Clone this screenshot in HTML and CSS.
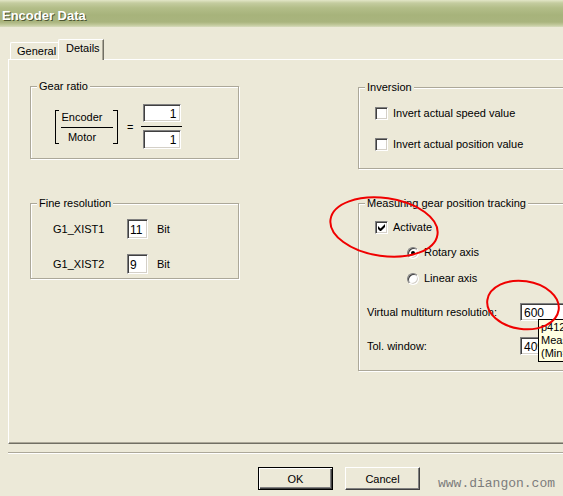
FILE: index.html
```html
<!DOCTYPE html>
<html>
<head>
<meta charset="utf-8">
<title>Encoder Data</title>
<link rel="stylesheet" href="styles.css">
</head>
<body>
<div class="titlebar"><span class="title">Encoder Data</span></div>
<div class="tabs">
  <div class="tab">General</div>
  <div class="tab active">Details</div>
</div>
<div class="panel">
  <div class="col col-left">
    <div class="group gear">
      <div class="gtitle">Gear ratio</div>
      <div class="gear-row">
        <div class="ratio">
          <span class="br br-l"></span>
          <div class="frac">
            <span>Encoder</span>
            <i class="fline"></i>
            <span class="motor">Motor</span>
          </div>
          <span class="br br-r"></span>
        </div>
        <span class="eq">=</span>
        <div class="boxes">
          <div class="field num b1">1</div>
          <i class="fline2"></i>
          <div class="field num b2">1</div>
        </div>
      </div>
    </div>
    <div class="group fine">
      <div class="gtitle">Fine resolution</div>
      <div class="frow first">
        <span class="flabel">G1_XIST1</span>
        <div class="field small">11</div>
        <span class="unit">Bit</span>
      </div>
      <div class="frow second">
        <span class="flabel">G1_XIST2</span>
        <div class="field small">9</div>
        <span class="unit">Bit</span>
      </div>
    </div>
  </div>
  <div class="col col-right">
    <div class="group inversion">
      <div class="gtitle">Inversion</div>
      <div class="crow inv1"><span class="cb"></span><span class="clabel">Invert actual speed value</span></div>
      <div class="crow inv2"><span class="cb"></span><span class="clabel">Invert actual position value</span></div>
    </div>
    <div class="group tracking">
      <div class="gtitle">Measuring gear position tracking</div>
      <div class="crow act">
        <span class="cb checked"><svg width="7" height="7" viewBox="0 0 7 7"><path d="M0 2v3l2 2h1l4-4V0L2.5 4.5z" fill="#000"/></svg></span>
        <span class="clabel">Activate</span>
      </div>
      <div class="rrow rot"><span class="rb on"></span><span class="clabel">Rotary axis</span></div>
      <div class="rrow lin"><span class="rb"></span><span class="clabel">Linear axis</span></div>
      <div class="vrow vmr">
        <span class="vlabel">Virtual multiturn resolution:</span>
        <div class="field wide">600</div>
      </div>
      <div class="vrow tol">
        <span class="vlabel">Tol. window:</span>
        <div class="field wide">4096</div>
      </div>
    </div>
  </div>
</div>
<div class="sep"></div>
<div class="buttons">
  <button class="btn default">OK</button>
  <button class="btn">Cancel</button>
  <span class="watermark">www.diangon.com</span>
</div>
<div class="tooltip">
  <div>p412[0] Measuring gear</div>
  <div>Measuring gear: Virtual multiturn resolution</div>
  <div>(Min=0 Max=4294967295)</div>
</div>
<svg class="marks" width="563" height="496" viewBox="0 0 563 496">
  <ellipse cx="384" cy="227" rx="54" ry="29" transform="rotate(8 384 227)" fill="none" stroke="#f00000" stroke-width="2"/>
  <ellipse cx="523" cy="305" rx="36" ry="24" transform="rotate(8 523 305)" fill="none" stroke="#f00000" stroke-width="2"/>
</svg>
</body>
</html>
```
FILE: styles.css
```css
html, body {
  margin: 0;
  padding: 0;
  overflow: hidden;
}
body {
  width: 563px;
  height: 496px;
  background: #ece9d8;
  font-family: "Liberation Sans", Arial, sans-serif;
  font-size: 11px;
  color: #000;
}

/* title bar */
.titlebar {
  height: 27px;
  box-sizing: border-box;
  padding-left: 2px;
  display: flex;
  align-items: center;
  background: linear-gradient(#e2e6c7 0px, #c4cc9f 3px, #b2bd88 8px, #a7b37b 15px, #a9b47e 22px, #c2c99c 25px, #d7dbbd 27px);
}
.title {
  margin-top: 3px;
  font-weight: bold;
  font-size: 13px;
  color: #fff;
  text-shadow: 1px 1px 0 #4e5732;
}

/* tabs */
.tabs {
  display: flex;
  align-items: flex-end;
  margin-left: 10px;
  padding-top: 12px;
  height: 20px;
}
.tab {
  box-sizing: border-box;
  height: 17px;
  width: 48px;
  padding: 2px 0 0 6px;
  line-height: 13px;
  border-top: 1px solid #fff;
  border-left: 1px solid #fff;
  border-top-left-radius: 2px;
}
.tab.active {
  position: relative;
  z-index: 1;
  height: 21px;
  width: 46px;
  padding: 2px 0 0 7px;
  margin-bottom: -1px;
  background: #ece9d8;
  border-right: 1px solid #716f64;
  box-shadow: inset -1px 0 0 #aca899;
}

/* panel */
.panel {
  box-sizing: border-box;
  margin-left: 8px;
  width: 600px;
  height: 385px;
  border-top: 1px solid #fff;
  border-left: 1px solid #fff;
  border-bottom: 1px solid #716f64;
  box-shadow: inset 0 -1px 0 #aca899;
  padding-left: 21px;
  display: flex;
}
.col-left {
  width: 209px;
  flex: none;
}
.col-right {
  margin-left: 119px;
  width: 240px;
  flex: none;
}

/* group boxes */
.group {
  box-sizing: border-box;
  border: 1px solid #aca899;
  box-shadow: inset 1px 1px 0 #fff, 1px 1px 0 #fff;
}
.gtitle {
  width: fit-content;
  margin: -7px 0 0 6px;
  padding: 0 2px;
  line-height: 13px;
  background: #ece9d8;
}
.gear { margin-top: 26px; height: 73px; }
.fine { margin-top: 44px; height: 76px; }
.inversion { margin-top: 27px; height: 82px; }
.tracking { margin-top: 34px; height: 168px; }

/* fields */
.field {
  box-sizing: border-box;
  background: #fff;
  border: 1px solid;
  border-color: #808080 #fff #fff #808080;
  box-shadow: inset 1px 1px 0 #404040, inset -1px -1px 0 #d4d0c8;
  font-size: 12px;
  display: flex;
  align-items: center;
  padding: 1px 2px 0 2px;
}
.field.num {
  justify-content: flex-end;
  padding-right: 3px;
}

/* gear ratio */
.gear-row {
  display: flex;
  align-items: center;
  margin: 11px 0 0 24px;
}
.ratio {
  display: flex;
  align-items: stretch;
  height: 34px;
}
.br {
  border-top: 1px solid #000;
  border-bottom: 1px solid #000;
}
.br-l { width: 3px; border-left: 1px solid #000; }
.br-r { width: 4px; border-right: 1px solid #000; }
.frac {
  width: 52px;
  margin-left: 2px;
  padding-top: 1px;
  display: flex;
  flex-direction: column;
  align-items: center;
}
.frac span {
  line-height: 13px;
  margin-right: 10px;
}
.fline {
  align-self: stretch;
  height: 1px;
  background: #000;
  margin-top: 3px;
}
.frac .motor { margin-top: 3px; }
.eq {
  width: 7px;
  margin-left: 9px;
}
.boxes {
  width: 41px;
  margin-left: 7px;
  display: flex;
  flex-direction: column;
  align-items: center;
}
.boxes .field { width: 38px; }
.b1 { height: 18px; }
.b2 { height: 19px; margin-top: 3px; }
.fline2 {
  width: 41px;
  height: 1px;
  background: #000;
  margin-top: 4px;
}

/* fine resolution */
.frow {
  display: flex;
  align-items: center;
  height: 20px;
  margin-left: 22px;
}
.frow.first { margin-top: 9px; }
.frow.second { margin-top: 15px; }
.flabel { width: 74px; }
.field.small { width: 21px; height: 20px; }
.unit { margin-left: 9px; }

/* checkboxes & radios */
.crow, .rrow {
  display: flex;
  align-items: center;
  height: 13px;
}
.crow { margin-left: 16px; }
.rrow { margin-left: 48px; }
.inv1 { margin-top: 13px; }
.inv2 { margin-top: 18px; }
.act { margin-top: 11px; }
.rot { margin-top: 12px; }
.lin { margin-top: 13px; }
.clabel {
  line-height: 13px;
  margin-left: 5px;
  white-space: nowrap;
}
.cb {
  box-sizing: border-box;
  width: 13px;
  height: 13px;
  flex: none;
  background: #fff;
  border: 1px solid;
  border-color: #808080 #fff #fff #808080;
  box-shadow: inset 1px 1px 0 #404040, inset -1px -1px 0 #d4d0c8;
  display: flex;
  align-items: center;
  justify-content: center;
}
.cb svg { display: block; }
.rb {
  box-sizing: border-box;
  width: 12px;
  height: 12px;
  flex: none;
  border-radius: 50%;
  background: #fff;
  border: 1px solid;
  border-color: #808080 #fff #fff #808080;
  box-shadow: inset 1px 1px 0 #404040, inset -1px -1px 0 #d4d0c8;
  display: flex;
  align-items: center;
  justify-content: center;
}
.rb.on::after {
  content: "";
  width: 4px;
  height: 4px;
  border-radius: 50%;
  background: #000;
}

/* value rows */
.vrow {
  display: flex;
  align-items: center;
  height: 18px;
  margin-left: 8px;
}
.vmr { margin-top: 18px; }
.tol { margin-top: 16px; }
.vlabel {
  width: 153px;
  white-space: nowrap;
}
.field.wide {
  width: 60px;
  height: 18px;
  padding-left: 3px;
}

/* bottom */
.sep {
  margin: 8px 0 0 8px;
  height: 1px;
  background: #aca899;
  border-bottom: 1px solid #fff;
}
.buttons {
  display: flex;
  align-items: flex-start;
  margin-top: 13px;
  padding-left: 258px;
}
.btn {
  box-sizing: border-box;
  width: 75px;
  height: 23px;
  padding: 0;
  margin: 0;
  background: #ece9d8;
  font-family: "Liberation Sans", Arial, sans-serif;
  font-size: 11px;
  color: #000;
  border: 1px solid;
  border-color: #fff #404040 #404040 #fff;
  box-shadow: inset -1px -1px 0 #808080;
}
.btn.default {
  border: 1px solid #000;
  box-shadow: inset 1px 1px 0 #fff, inset -1px -1px 0 #404040, inset -2px -2px 0 #808080;
}
.btn + .btn { margin-left: 12px; }
.watermark {
  margin: 9px 0 0 18px;
  font-family: "Liberation Mono", "Courier New", monospace;
  font-size: 13px;
  line-height: 15px;
  color: #7c7c7c;
  white-space: nowrap;
}

/* overlays */
.tooltip {
  position: absolute;
  left: 538px;
  top: 319px;
  width: 220px;
  height: 43px;
  box-sizing: border-box;
  border: 1px solid #000;
  background: #ffffe1;
  padding: 1px 2px;
  line-height: 13px;
  white-space: nowrap;
}
.marks {
  position: absolute;
  left: 0;
  top: 0;
  pointer-events: none;
}
```
